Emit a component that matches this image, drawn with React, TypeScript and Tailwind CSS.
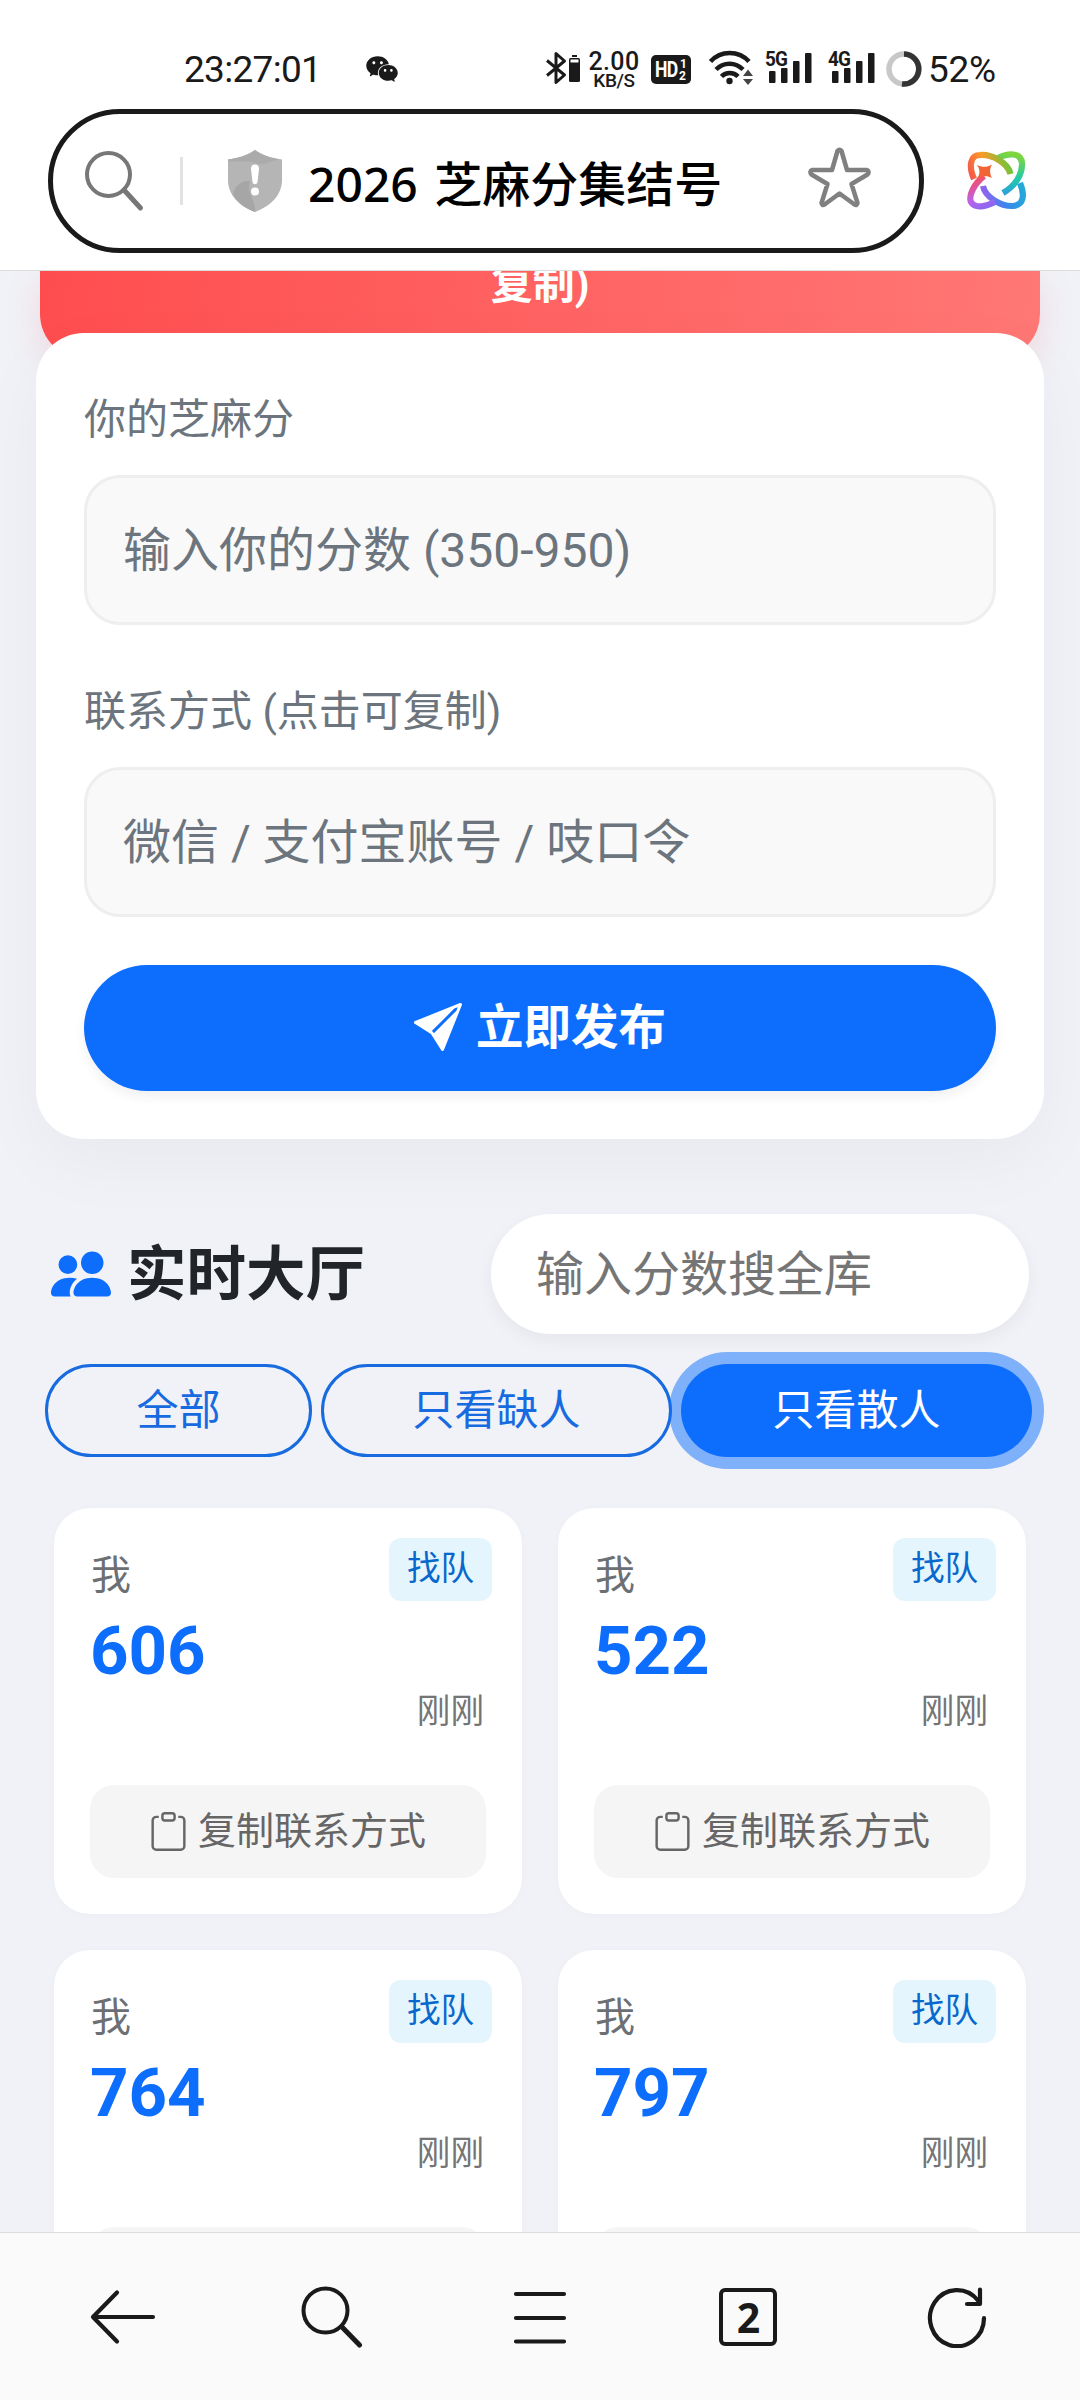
import { BsSendFill, BsPeopleFill, BsClipboard } from "react-icons/bs";
import { AiFillWechat } from "react-icons/ai";

const posts = [{ score: 606 }, { score: 522 }, { score: 764 }, { score: 797 }];

function SignalBars() {
  return (
    <svg className="block h-[34px] w-[46px]" viewBox="0 0 46 34" fill="#1a1a1a">
      <rect x="3" y="22" width="6.5" height="12" rx="1" />
      <rect x="15" y="19" width="6.5" height="15" rx="1" />
      <rect x="27" y="12" width="6.5" height="22" rx="1" />
      <rect x="39" y="4" width="6.5" height="30" rx="1" />
    </svg>
  );
}

function Signal({ label }: { label: string }) {
  return (
    <div className="relative h-[34px] w-[46px]">
      <SignalBars />
      <span className="absolute -left-px top-[2px] origin-left scale-x-90 text-[21px] font-bold leading-[17px] tracking-[-1px]">
        {label}
      </span>
    </div>
  );
}

function StatusBar() {
  return (
    <div className="flex h-[109px] pl-[184px] pt-[49px] text-[#1a1a1a]">
      <div className="w-[180px] text-[37px] leading-[41px] tracking-[-0.7px]">23:27:01</div>
      <AiFillWechat className="mt-[2px] size-[36px]" />
      <div className="ml-[146px] flex">
        <svg className="h-[36px] w-[36px]" viewBox="0 0 36 36" fill="none">
          <path d="M1 11.500 L18.500 26 L10 33.500 V4.500 L18.500 12 L1 26.500" stroke="#1a1a1a" strokeWidth="3" strokeLinejoin="round" />
          <rect x="23" y="9" width="11" height="24" rx="1.500" fill="#1a1a1a" />
          <rect x="26" y="6" width="5" height="2" fill="#1a1a1a" />
          <rect x="24.500" y="10.500" width="8" height="3" fill="#fff" />
        </svg>
        <div className="ml-[6px] flex w-[52px] flex-col items-center">
          <span className="mt-px text-[25px] font-medium leading-[23px] tracking-[0.4px]">2.00</span>
          <span className="text-[19px] font-medium leading-[16px] tracking-[-0.4px]">KB/S</span>
        </div>
        <div className="ml-[11px] mt-[6px] flex h-[29px] w-[40px] items-center rounded-[5px] bg-[#1a1a1a] text-white">
          <span className="ml-[4px] w-[22px] origin-left scale-x-80 text-[22px] font-bold leading-[28px] tracking-[-1px]">HD</span>
          <span className="ml-[2px] flex flex-col text-[12px] font-bold leading-[12px]">
            <span className="ml-px">1</span>
            <span>2</span>
          </span>
        </div>
        <svg className="ml-[17px] h-[37px] w-[46px]" viewBox="0 0 46 37" fill="none" stroke="#1a1a1a" strokeWidth="4.500">
          <path d="M2.500 12.500 A26 26 0 0 1 41 12.500" />
          <path d="M8 20.500 A18.500 18.500 0 0 1 35 20.500" />
          <path d="M13.500 27.500 A11.500 11.500 0 0 1 30 27.500" />
          <circle cx="21.500" cy="32" r="3.200" fill="#1a1a1a" stroke="none" />
          <path d="M35 27 L40 20.500 L45 27 Z M35 30 L40 36 L45 30 Z" fill="#444" stroke="none" />
        </svg>
        <div className="ml-[12px]">
          <Signal label="5G" />
        </div>
        <div className="ml-[17px]">
          <Signal label="4G" />
        </div>
        <svg className="ml-[11px] mt-[2px] size-[36px]" viewBox="0 0 36 36" fill="none" strokeWidth="5.500">
          <circle cx="18" cy="18" r="15" stroke="#c8c8c8" />
          <path d="M18 3 A15 15 0 1 1 16 32.900" stroke="#333" />
        </svg>
        <span className="ml-[6px] text-[37px] leading-[41px] tracking-[-0.3px]">52%</span>
      </div>
    </div>
  );
}

function AddressBar() {
  return (
    <div className="flex h-[144px] items-center pl-[48px]">
      <div className="flex h-[144px] w-[876px] items-center rounded-full border-[5px] border-[#1a1a1a] pl-[31px]">
        <svg className="size-[62px]" viewBox="0 0 62 62" fill="none" stroke="#777" strokeLinecap="round">
          <circle cx="24.500" cy="24.500" r="21.500" strokeWidth="4" />
          <path d="M40 40 L56.500 58" strokeWidth="5" />
        </svg>
        <div className="ml-[34px] h-[48px] w-[3px] bg-[#e2e2e2]" />
        <svg className="ml-[44px] h-[64px] w-[56px]" viewBox="0 0 56 64">
          <path d="M28 1 C36 7 46 9 55 10.500 V31 C55 46 44 57 28 63 C12 57 1 46 1 31 V10.500 C10 9 20 7 28 1 Z" fill="#b5b5b5" />
          <path d="M1 12 V10.500 C10 9 20 7 28 1 C36 7 45 9 54 10.500 C44 10 38 18 28 14 C18 10 10 14 1 12 Z" fill="#ababab" />
          <path d="M6 45 C8 36 16 31 23 32 C19 45 29 50 28 63 C18 59 10 54 6 45 Z" fill="#a6a6a6" />
          <path d="M28 15.500 C31 15.500 32 17 32 20 L30.500 33 C30 36 26 36 25.500 33 L24 20 C24 17 25 15.500 28 15.500 Z" fill="#fff" />
          <circle cx="28" cy="42.500" r="4" fill="#fff" />
        </svg>
        <div className="ml-[25px] mt-[5px] w-[499px] whitespace-nowrap font-['Noto_Sans','Noto_Sans_CJK_SC',sans-serif] text-[48px] font-medium leading-[60px] text-black [word-spacing:4px]">
          2026 芝麻分集结号
        </div>
        <svg className="-mt-[6px] h-[64px] w-[66px] shrink-0" viewBox="0 0 66 64" fill="none" stroke="#808080" strokeWidth="4.500" strokeLinejoin="round">
          <path d="M30.500 5 Q32.500 2.500 34.500 5 L40 24 H60 Q63 25.500 60.500 28.500 L44.500 38 L50.500 57 Q50 60 47.500 58.500 L32.500 47.500 L17.500 58.500 Q15 60 14.500 57 L20.500 38 L4.500 28.500 Q2 25.500 5 24 H25 Z" />
        </svg>
      </div>
      <svg className="ml-[43px] size-[60px]" viewBox="0 0 60 60" fill="none" strokeWidth="6.200" strokeLinecap="butt">
        <defs>
          <linearGradient id="warm" gradientUnits="userSpaceOnUse" x1="4" y1="30" x2="45" y2="12">
            <stop offset="0" stopColor="#f4524d" />
            <stop offset="0.450" stopColor="#fb9a28" />
            <stop offset="1" stopColor="#5ccb3d" />
          </linearGradient>
          <linearGradient id="cool" gradientUnits="userSpaceOnUse" x1="50" y1="4" x2="42" y2="42">
            <stop offset="0" stopColor="#7ed63c" />
            <stop offset="0.600" stopColor="#21c9ac" />
            <stop offset="1" stopColor="#2ba5d8" />
          </linearGradient>
          <linearGradient id="violet" gradientUnits="userSpaceOnUse" x1="8" y1="26" x2="22" y2="56">
            <stop offset="0" stopColor="#fa4e58" />
            <stop offset="0.600" stopColor="#bd61ea" />
            <stop offset="1" stopColor="#8a68f0" />
          </linearGradient>
          <linearGradient id="blue" gradientUnits="userSpaceOnUse" x1="54" y1="32" x2="15" y2="42">
            <stop offset="0" stopColor="#25a9d8" />
            <stop offset="0.500" stopColor="#3b86ee" />
            <stop offset="1" stopColor="#9560ee" />
          </linearGradient>
        </defs>
        <path d="M31 7 C41 2 54 1 55 12 C55.500 24 48 35 36 42" stroke="url(#cool)" />
        <path d="M53 32 C58 44 57 54 46 55 C34 55.500 18 46 16 35" stroke="url(#blue)" />
        <path d="M17 25 C8 32 1 44 4 51 C8 58 19 55.500 28 51" stroke="url(#violet)" />
        <path d="M7 28 C1 14 4 4 13 4 C25 3 41 12 43.500 23" stroke="url(#warm)" />
        <path d="M10 14 C15 16.500 20 16.500 25 13.500 C22.500 18 22.500 22 25 27 C20 24.500 16 25 10 27.500 C13.500 22.500 13 18.500 10 14 Z" fill="#f26436" />
      </svg>
    </div>
  );
}

function Field({ label, placeholder }: { label: string; placeholder: string }) {
  return (
    <div className="mb-[48px]">
      <div className="mb-[23px] h-[71px] pt-[7px] text-[42px] leading-[63px] text-[#6c757d]">{label}</div>
      <div className="flex h-[150px] items-center rounded-[36px] border-[3px] border-[#eee] bg-[#f9f9f9] px-[36px] pt-[2px] text-[48px] text-[#6c757d]">
        {placeholder}
      </div>
    </div>
  );
}

function PostCard({ score }: { score: number }) {
  return (
    <div className="relative h-[406px] rounded-[36px] bg-white px-[36px] pt-[36px] shadow-[0_1px_8px_rgba(0,0,0,0.025)]">
      <div className="absolute right-[30px] top-[30px] flex h-[63px] w-[103px] items-center justify-center rounded-[12px] bg-[#e5f5fe] text-[33.6px] text-[#0868cc]">
        找队
      </div>
      <div className="pl-px text-[40px] leading-[63px] text-[#6c6f73]">我</div>
      <div className="mt-[2px] text-[67.2px] font-bold leading-[84px] text-[#0d6efd]">{score}</div>
      <div className="pr-[2px] text-right text-[33.6px] leading-[37px] text-[#757575]">刚刚</div>
      <div className="mt-[55px] flex h-[93px] items-center justify-center gap-[10px] rounded-[24px] bg-[#f5f5f5] pr-px text-[38px] text-[#666]">
        <BsClipboard className="size-[39px]" />
        <span>复制联系方式</span>
      </div>
    </div>
  );
}

export default function App() {
  return (
    <div className="flex h-[2400px] w-[1080px] flex-col overflow-hidden bg-[#f0f2f7] font-[Roboto,'Noto_Sans_CJK_SC',sans-serif]">
      <header className="h-[271px] shrink-0 border-b border-[#ddd] bg-white">
        <StatusBar />
        <AddressBar />
      </header>

      <main className="h-[1961px] shrink-0 overflow-hidden">
        <div className="mx-[40px] h-[88px] rounded-b-[45px] bg-[linear-gradient(100deg,#ff4d4f,#ff7875)] text-center text-[42px] font-bold leading-[34px] text-white shadow-[0_12px_36px_rgba(255,77,79,0.15)]">
          <span className="relative -top-[3px]">复制)</span>
        </div>

        <section className="relative mx-[36px] -mt-[26px] h-[806px] rounded-[48px] bg-white px-[48px] pt-[48px] shadow-[0_24px_72px_rgba(0,0,0,0.04)]">
          <Field label="你的芝麻分" placeholder="输入你的分数 (350-950)" />
          <Field label="联系方式 (点击可复制)" placeholder="微信 / 支付宝账号 / 吱口令" />
          <div className="flex h-[126px] items-center justify-center gap-[14px] rounded-full bg-[#0d6efd] pt-px text-[47.5px] font-bold text-white shadow-[0_6px_12px_rgba(0,0,0,0.06)]">
            <BsSendFill className="-mt-[3px] size-[48px]" />
            <span>立即发布</span>
          </div>
        </section>

        <div className="mt-[74px] flex h-[121px] items-center pl-[51px] pr-[51px]">
          <BsPeopleFill className="size-[60px] text-[#0d6efd]" />
          <h2 className="ml-[16px] mt-[3px] text-[59.5px] font-bold leading-[72px] text-[#212529]">实时大厅</h2>
          <div className="relative ml-auto flex h-[120px] w-[538px] items-center rounded-full bg-white pl-[45px] pt-[2px] text-[48px] text-[#757575] shadow-[0_6px_18px_rgba(0,0,0,0.05)]">
            输入分数搜全库
          </div>
        </div>

        <div className="mt-[30px] flex gap-[9px] pl-[45px] text-[42px] text-[#0d6efd]">
          <div className="flex h-[93px] w-[267px] items-center justify-center rounded-full border-[3px] border-[#176ae0] text-[#176ae0]">全部</div>
          <div className="flex h-[93px] w-[351px] items-center justify-center rounded-full border-[3px] border-[#176ae0] text-[#176ae0]">只看缺人</div>
          <div className="flex h-[93px] w-[351px] items-center justify-center rounded-full bg-[#0d6efd] text-white shadow-[0_0_0_12px_rgba(13,110,253,0.5)]">只看散人</div>
        </div>

        <div className="mt-[51px] grid grid-cols-2 gap-x-[36px] gap-y-[36px] px-[54px]">
          {posts.map((p) => (
            <PostCard key={p.score} score={p.score} />
          ))}
        </div>
      </main>

      <nav className="grid h-[168px] shrink-0 grid-cols-5 items-center justify-items-center border-t border-[#dcdcdc] bg-[#fafafa] px-[19px]">
        <svg className="h-[62px] w-[66px]" viewBox="0 0 66 62" fill="none" stroke="#1a1a1a" strokeWidth="4.200" strokeLinecap="round" strokeLinejoin="round">
          <path d="M63 31 H3 M27 6.500 L3 31 L27 55.500" />
        </svg>
        <svg className="h-[62px] w-[62px]" viewBox="0 0 62 62" fill="none" stroke="#1a1a1a" strokeLinecap="round">
          <circle cx="24.500" cy="24.500" r="22" strokeWidth="4" />
          <path d="M41 41 L58.500 59" strokeWidth="5" />
        </svg>
        <svg className="h-[62px] w-[54px]" viewBox="0 0 54 62" fill="none" stroke="#1a1a1a" strokeWidth="4.200" strokeLinecap="round">
          <path d="M3 8 H51 M3 32 H51 M3 55.500 H51" />
        </svg>
        <div className="flex h-[58px] w-[58px] items-center justify-center rounded-[6px] border-[4px] border-[#1a1a1a] font-['Noto_Sans',sans-serif] text-[41px] font-bold leading-[50px] text-[#1a1a1a]">
          2
        </div>
        <svg className="h-[62px] w-[60px]" viewBox="0 0 60 62" fill="none" stroke="#1a1a1a" strokeWidth="4.200" strokeLinecap="round" strokeLinejoin="round">
          <path d="M57 32 A27 28 0 1 1 51 14.500 M53 3.500 V18 H40" />
        </svg>
      </nav>
    </div>
  );
}
